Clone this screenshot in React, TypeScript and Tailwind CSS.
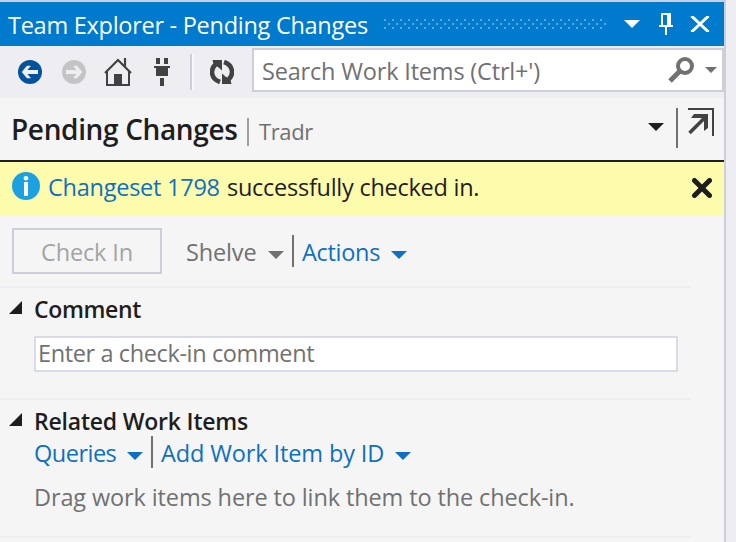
import React from "react";

function Caret({ className = "" }: { className?: string }) {
  return (
    <svg className={"shrink-0 " + className} width="16" height="8" viewBox="0 0 16 8">
      <path d="M0 0H16L8 8Z" fill="currentColor" />
    </svg>
  );
}

function TitleBar() {
  return (
    <div className="flex h-11 items-center bg-[#007acc] pl-2 text-white">
      <span className="w-[376px] pt-[3px] text-[23.5px] tracking-[-0.27px]">Team Explorer - Pending Changes</span>
      <svg className="shrink-0" width="222" height="10" viewBox="0 0 222 10">
        <defs>
          <pattern id="grip" width="8" height="8" patternUnits="userSpaceOnUse">
            <path d="M0 0h2v2H0zM4 4h2v2H4z" fill="#59a8de" />
          </pattern>
        </defs>
        <rect width="222" height="10" fill="url(#grip)" />
      </svg>
      <Caret className="ml-[18px]" />
      <svg className="ml-[19px] shrink-0" width="14" height="22" viewBox="0 0 14 22">
        <path d="M2 0H12V12H14V14H8V22H6V14H0V12H2ZM4 2V12H8V2Z" fill="#fff" fillRule="evenodd" />
      </svg>
      <svg className="ml-[17px] shrink-0" width="20" height="16" viewBox="0 0 20 16">
        <path d="M1.5 0L18.5 16M18.5 0L1.5 16" stroke="#fff" strokeWidth="3" />
      </svg>
    </div>
  );
}

function Toolbar() {
  return (
    <div className="flex h-[52px] bg-[#eeeef2] pl-[18px] pt-0.5 text-[#424242]">
      <div className="flex h-12 items-start pt-3">
        <svg className="shrink-0" width="24" height="24" viewBox="0 0 24 24">
          <circle cx="12" cy="12" r="12" fill="#00539c" />
          <path d="M20 12H6" stroke="#f0eff1" strokeWidth="4" />
          <path d="M12.500 6H9L4 12L9 18H12.500L7.500 12Z" fill="#f0eff1" stroke="#f0eff1" strokeWidth="0.5" />
        </svg>
        <svg className="ml-5 shrink-0" width="24" height="24" viewBox="0 0 24 24">
          <circle cx="12" cy="12" r="12" fill="#c4c4c6" />
          <path d="M4 12H18" stroke="#eeeef2" strokeWidth="4" />
          <path d="M11.500 6H15L20 12L15 18H11.500L16.500 12Z" fill="#eeeef2" stroke="#eeeef2" strokeWidth="0.5" />
        </svg>
        <svg className="-mt-2 ml-[18px] shrink-0" width="28" height="34" viewBox="0 0 28 34">
          <path d="M3 19V33H25V19" fill="none" stroke="currentColor" strokeWidth="2" />
          <path d="M1 21L14 8L27 21M21 6V14" fill="none" stroke="currentColor" strokeWidth="2.2" />
          <path d="M10 22h8v11h-8z" fill="currentColor" />
        </svg>
        <svg className="-mt-0.5 ml-[22px] shrink-0" width="16" height="28" viewBox="0 0 16 28">
          <path d="M2 0h4v6H2zM10 0h4v6h-4zM0 8h16v2h-2v8H2v-8H0zM6 20h4v8H6z" fill="currentColor" />
        </svg>
      </div>
      <div className="ml-5 mt-1.5 h-9 w-0.5 bg-[#ccceda]" />
      <div className="mt-1.5 h-9 w-0.5 bg-[#f8f8fb]" />
      <svg className="ml-4 mt-3 shrink-0" width="24" height="24" viewBox="0 0 24 24">
        <path d="M10 22C1 19 0 10 5 5" fill="none" stroke="currentColor" strokeWidth="4.600" />
        <path d="M2.500 0H12V10.500L8 7L4 6Z" fill="currentColor" />
        <path d="M14 2C23 5 24 14 19 19" fill="none" stroke="currentColor" strokeWidth="4.600" />
        <path d="M21.500 24H12V13.500L16 17L20 18Z" fill="currentColor" />
      </svg>
      <div className="ml-[18px] flex h-11 w-[472px] items-center border-2 border-[#ccceda] bg-white pl-2 text-[#717171]">
        <span className="w-[406px] pt-1 text-[23.5px] tracking-[-0.18px]">Search Work Items (Ctrl+')</span>
        <svg className="shrink-0" width="26" height="26" viewBox="0 0 26 26">
          <circle cx="17" cy="9" r="7" fill="none" stroke="currentColor" strokeWidth="4" />
          <path d="M12 14L2 24" stroke="currentColor" strokeWidth="5" />
        </svg>
        <svg className="ml-[11px] shrink-0" width="12" height="6" viewBox="0 0 12 6">
          <path d="M0 0H12L6 6Z" fill="currentColor" />
        </svg>
      </div>
    </div>
  );
}

function PageHeader() {
  return (
    <div className="flex h-16 items-start border-b-2 border-[#1e1e1e] pl-[11px] text-[#1e1e1e]">
      <h1 className="w-[236px] pt-[11px] text-[28px] font-semibold leading-10 tracking-[-0.35px]">Pending Changes</h1>
      <div className="mt-5 h-[28px] w-0.5 bg-[#a0a0a0]" />
      <span className="w-[399px] pl-2.5 pt-[13px] text-[22px] leading-10 tracking-[-0.4px] text-[#717171]">Tradr</span>
      <Caret className="mt-[25px]" />
      <div className="ml-3 mt-2.5 h-10 w-0.5 bg-[#717171]" />
      <svg className="ml-2.5 mt-2.5 shrink-0 text-[#424242]" width="26" height="28" viewBox="0 0 26 28">
        <path d="M0 0H26V28H24V2H0Z" fill="currentColor" />
        <path d="M1.500 25L17 9.500" stroke="currentColor" strokeWidth="3.500" />
        <path d="M6 6H20V20L16 23V10H3Z" fill="currentColor" />
      </svg>
    </div>
  );
}

function Notice() {
  return (
    <div className="flex h-[54px] items-start bg-[#fdfbac] pl-3 text-[23.5px] leading-[51px] text-[#1e1e1e]">
      <svg className="mt-2.5 shrink-0" width="28" height="28" viewBox="0 0 28 28">
        <circle cx="14" cy="14" r="14" fill="#1ba1e2" />
        <circle cx="14" cy="6.300" r="2.300" fill="#fff" />
        <path d="M12 10h4v14h-4z" fill="#fff" />
      </svg>
      <span className="ml-2 w-[179px] tracking-[-0.25px] text-[#0e70c0]">Changeset 1798</span>
      <span className="w-[465px] tracking-[-0.26px]">successfully checked in.</span>
      <svg className="mt-4 shrink-0" width="20" height="20" viewBox="0 0 20 20">
        <path d="M2.500 2.500L17.500 17.500M17.500 2.500L2.500 17.500" stroke="currentColor" strokeWidth="5" strokeLinecap="round" />
      </svg>
    </div>
  );
}

function Expander() {
  return (
    <svg className="mt-2 shrink-0" width="14" height="14" viewBox="0 0 14 14">
      <path d="M13 0V13H0Z" fill="#1e1e1e" />
    </svg>
  );
}

export default function App() {
  return (
    <div className="flex h-[542px] w-[736px] overflow-hidden whitespace-nowrap bg-[#eeeef2] font-['Open_Sans','Noto_Sans',sans-serif]">
      <div className="h-[542px] w-[726px] border-r-2 border-t-2 border-[#ccceda] bg-[#f5f5f5]">
        <TitleBar />
        <Toolbar />
        <PageHeader />
        <Notice />
        <main className="w-[690px] text-[23.5px] leading-8">
          <section className="flex h-[72px] items-start border-b-2 border-[#eeeef2] pl-3 pt-3 text-[#717171]">
            <button className="h-[46px] w-[150px] border-2 border-[#ccceda] pt-0.5 tracking-[-0.15px] text-[#a2a4a5]">Check In</button>
            <span className="ml-6 mt-2 w-[82px] tracking-[-0.15px]">Shelve</span>
            <Caret className="mt-[23px]" />
            <div className="ml-2 mt-[7px] h-8 w-0.5 bg-[#717171]" />
            <span className="ml-2 mt-2 w-[89px] tracking-[-0.3px] text-[#0e70c0]">Actions</span>
            <Caret className="mt-[23px] text-[#0e70c0]" />
          </section>
          <section className="h-28 border-b-2 border-[#eeeef2] pl-[9px] pt-[5px]">
            <div className="flex items-start">
              <Expander />
              <h2 className="ml-[11px] text-[23px] font-semibold tracking-[-0.35px] text-[#1e1e1e]">Comment</h2>
            </div>
            <div className="ml-[25px] mt-[11px] h-9 w-[644px] border-2 border-[#d9dce6] bg-white pl-0.5 leading-[31px] tracking-[-0.38px] text-[#717171]">Enter a check-in comment</div>
          </section>
          <section className="h-[138px] border-b-2 border-[#eeeef2] pl-[9px] pt-[5px]">
            <div className="flex items-start">
              <Expander />
              <h2 className="ml-[11px] text-[23px] font-semibold tracking-[-0.2px] text-[#1e1e1e]">Related Work Items</h2>
            </div>
            <div className="ml-[25px] flex items-start text-[#0e70c0]">
              <span className="w-[93px] tracking-[-0.5px]">Queries</span>
              <Caret className="mt-[15px]" />
              <div className="ml-2 -mt-px h-8 w-0.5 bg-[#717171]" />
              <span className="ml-2 w-[234px] tracking-[-0.12px]">Add Work Item by ID</span>
              <Caret className="mt-[15px]" />
            </div>
            <p className="ml-[25px] mt-3 tracking-[-0.12px] text-[#717171]">Drag work items here to link them to the check-in.</p>
          </section>
        </main>
      </div>
    </div>
  );
}
